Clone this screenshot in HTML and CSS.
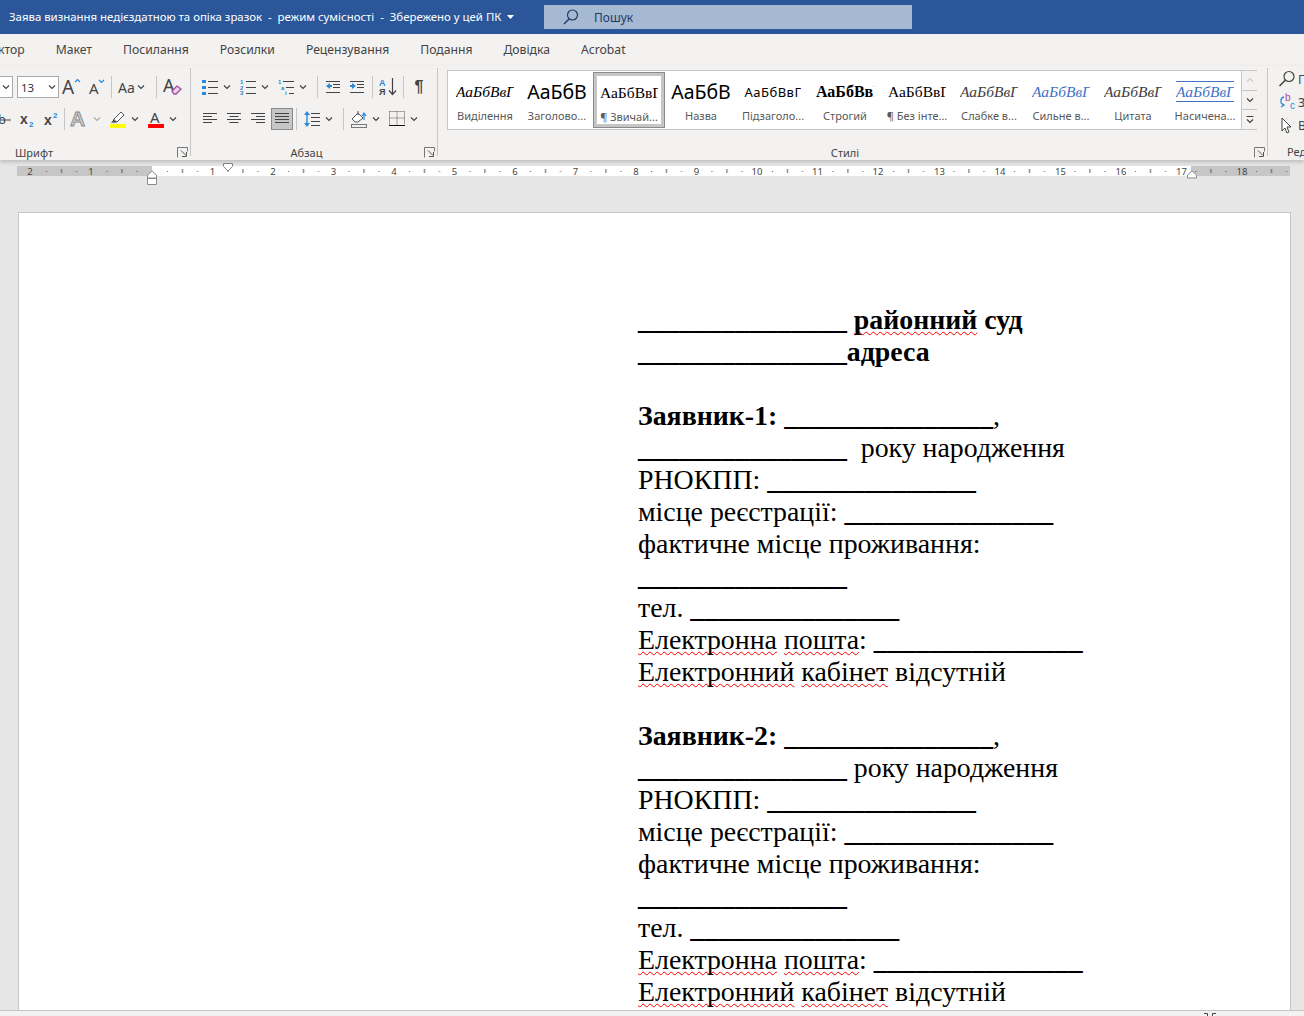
FILE: index.html
```html
<!DOCTYPE html>
<html lang="uk">
<head>
    <meta charset="UTF-8">
    <meta name="viewport" content="width=device-width, initial-scale=1.0">
    <title>Заява визнання недієздатною та опіка зразок</title>
    <link rel="stylesheet" href="styles.css">
</head>
<body>

<svg class="defs" width="0" height="0">
    <symbol id="chev" viewBox="0 0 10 10"><polyline points="2,3.5 5,6.5 8,3.5" fill="none" stroke="#444" stroke-width="1.2"/></symbol>
    <symbol id="launch" viewBox="0 0 11 11"><path d="M.5 10.5V.5h10v4" fill="none" stroke="#777"/><path d="M4 3.5l5 5M9.5 5v4.5H5" fill="none" stroke="#555"/></symbol>
    <symbol id="lines-left" viewBox="0 0 16 14"><path d="M1 1.5h14M1 4.5h9M1 7.5h14M1 10.5h9" stroke="#444" fill="none"/></symbol>
    <symbol id="lines-center" viewBox="0 0 16 14"><path d="M1 1.5h14M3.5 4.5h9M1 7.5h14M3.5 10.5h9" stroke="#444" fill="none"/></symbol>
    <symbol id="lines-right" viewBox="0 0 16 14"><path d="M1 1.5h14M6 4.5h9M1 7.5h14M6 10.5h9" stroke="#444" fill="none"/></symbol>
    <symbol id="lines-just" viewBox="0 0 16 14"><path d="M1 1.5h14M1 4.5h14M1 7.5h14M1 10.5h14" stroke="#444" fill="none"/></symbol>
</svg>

<div class="titlebar">
    <div class="doc-name">Заява визнання недієздатною та опіка зразок &nbsp;-&nbsp; режим сумісності &nbsp;-&nbsp; Збережено у цей ПК</div>
    <svg class="caret" width="7" height="4" viewBox="0 0 7 4"><path d="M0 0h7L3.5 4z" fill="#fff"/></svg>
    <div class="search">
        <svg width="18" height="18" viewBox="0 0 18 18"><circle cx="10.5" cy="7" r="5" fill="none" stroke="#1f3a66" stroke-width="1.2"/><path d="M7 11l-5 5" stroke="#1f3a66" stroke-width="1.4"/></svg>
        <span>Пошук</span>
    </div>
</div>

<div class="tabs">
    <span>ктор</span>
    <span>Макет</span>
    <span>Посилання</span>
    <span>Розсилки</span>
    <span>Рецензування</span>
    <span>Подання</span>
    <span>Довідка</span>
    <span>Acrobat</span>
</div>

<div class="ribbon">
    <div class="group group-font">
        <div class="row">
            <div class="select select-name"><svg width="10" height="10"><use href="#chev"/></svg></div>
            <div class="select select-size"><span>13</span><svg width="10" height="10"><use href="#chev"/></svg></div>
            <div class="btn"><svg width="20" height="20" viewBox="0 0 20 20"><text x="0" y="17" class="ic-a" font-size="19">A</text><path d="M13 5l2.5-2.5L18 5" fill="none" stroke="#2b88d8" stroke-width="1.2"/></svg></div>
            <div class="btn"><svg width="20" height="20" viewBox="0 0 20 20"><text x="3" y="17" class="ic-a" font-size="15">A</text><path d="M13 3l2.5 2.5L18 3" fill="none" stroke="#2b88d8" stroke-width="1.2"/></svg></div>
            <div class="sep"></div>
            <div class="btn btn-aa"><span>Aa</span><svg width="10" height="10"><use href="#chev"/></svg></div>
            <div class="sep sep-wide"></div>
            <div class="btn"><svg width="20" height="20" viewBox="0 0 20 20"><text x="1" y="15" class="ic-a" font-size="18">A</text><path d="M10 14l5-5 4 3-5 5h-2z" fill="#e8d5ea" stroke="#a347a3" stroke-width="1.3"/></svg></div>
        </div>
        <div class="row row-lower">
            <div class="btn"><svg width="20" height="20" viewBox="0 0 20 20"><text x="5" y="15" class="ic-a" font-size="13">b</text><path d="M2 11h16" stroke="#444"/></svg></div>
            <div class="btn"><svg width="20" height="20" viewBox="0 0 20 20"><text x="3" y="15" class="ic-b" font-size="14">x</text><text x="12" y="18" class="ic-blue" font-size="8">2</text></svg></div>
            <div class="btn"><svg width="20" height="20" viewBox="0 0 20 20"><text x="3" y="16" class="ic-b" font-size="14">x</text><text x="12" y="9" class="ic-blue" font-size="8">2</text></svg></div>
            <div class="sep"></div>
            <div class="btn"><svg width="20" height="20" viewBox="0 0 20 20"><text x="0" y="17" font-size="21" class="ic-effect">A</text></svg></div>
            <svg class="chev chev-dim" width="10" height="10"><use href="#chev"/></svg>
            <div class="btn"><svg width="20" height="20" viewBox="0 0 20 20"><path d="M5 13l1-3 7-7 3 3-7 7z" fill="#fff" stroke="#555"/><path d="M3 14l3-4 3 3z" fill="#555"/><rect x="2" y="15" width="16" height="4" fill="#ffff00"/></svg></div>
            <svg class="chev" width="10" height="10"><use href="#chev"/></svg>
            <div class="btn"><svg width="20" height="20" viewBox="0 0 20 20"><text x="4" y="14" class="ic-a" font-size="15">A</text><rect x="2" y="15" width="16" height="4" fill="#f00"/></svg></div>
            <svg class="chev" width="10" height="10"><use href="#chev"/></svg>
        </div>
        <div class="group-foot"><span>Шрифт</span><svg width="11" height="11"><use href="#launch"/></svg></div>
    </div>

    <div class="group group-par">
        <div class="row">
            <div class="btn"><svg width="16" height="16" viewBox="0 0 16 16"><path d="M0 1h4v3H0zM0 7h4v3H0zM0 13h4v3H0z" fill="#2b88d8"/><path d="M6 2.5h10M6 8.5h10M6 14.5h10" stroke="#444"/></svg></div>
            <svg class="chev" width="10" height="10"><use href="#chev"/></svg>
            <div class="btn"><svg width="16" height="16" viewBox="0 0 16 16"><text x="0" y="5" class="ic-blue" font-size="6">1</text><text x="0" y="10.5" class="ic-blue" font-size="6">2</text><text x="0" y="16" class="ic-blue" font-size="6">3</text><path d="M6 2.5h10M6 8.5h10M6 14.5h10" stroke="#444"/></svg></div>
            <svg class="chev" width="10" height="10"><use href="#chev"/></svg>
            <div class="btn"><svg width="16" height="16" viewBox="0 0 16 16"><text x="0" y="5" class="ic-blue" font-size="6">1</text><text x="3" y="10.5" class="ic-blue" font-size="6">a</text><text x="7" y="16" class="ic-blue" font-size="6">i</text><path d="M5 2.5h11M8 8.5h8M11 14.5h5" stroke="#444"/></svg></div>
            <svg class="chev" width="10" height="10"><use href="#chev"/></svg>
            <div class="sep"></div>
            <div class="btn"><svg width="16" height="14" viewBox="0 0 16 14"><path d="M1 1.5h14M8 4.5h7M8 7.5h7M1 12.5h14" stroke="#444"/><path d="M1 6l4-3v2h2v2H5v2z" fill="#2b88d8"/></svg></div>
            <div class="btn"><svg width="16" height="14" viewBox="0 0 16 14"><path d="M1 1.5h14M8 4.5h7M8 7.5h7M1 12.5h14" stroke="#444"/><path d="M7 6L3 3v2H1v2h2v2z" fill="#2b88d8"/></svg></div>
            <div class="sep"></div>
            <div class="btn"><svg width="18" height="20" viewBox="0 0 18 20"><text x="0" y="9" class="ic-blue" font-size="9">А</text><text x="0" y="18" class="ic-b" font-size="9">Я</text><path d="M13.5 1v16M10 13.5l3.5 4 3.5-4" fill="none" stroke="#444" stroke-width="1.2"/></svg></div>
            <div class="sep"></div>
            <div class="btn pilcrow">¶</div>
        </div>
        <div class="row row-lower">
            <div class="btn"><svg width="16" height="14"><use href="#lines-left"/></svg></div>
            <div class="btn"><svg width="16" height="14"><use href="#lines-center"/></svg></div>
            <div class="btn"><svg width="16" height="14"><use href="#lines-right"/></svg></div>
            <div class="btn btn-on"><svg width="16" height="14"><use href="#lines-just"/></svg></div>
            <div class="sep"></div>
            <div class="btn"><svg width="16" height="16" viewBox="0 0 16 16"><path d="M3 1v14" stroke="#2b88d8" stroke-width="1.4"/><path d="M0 4l3-4 3 4zM0 12l3 4 3-4z" fill="#2b88d8"/><path d="M7 2.5h9M7 6.5h9M7 10.5h9M7 14.5h9" stroke="#444"/></svg></div>
            <svg class="chev" width="10" height="10"><use href="#chev"/></svg>
            <div class="sep"></div>
            <div class="btn"><svg width="18" height="18" viewBox="0 0 18 18"><path d="M2 9l6-6 5 5-5 4H5z" fill="#fff" stroke="#555"/><path d="M8 1v4" stroke="#555"/><path d="M14 10V4M12 6l2-3 2 3" fill="none" stroke="#2b88d8" stroke-width="1.2"/><rect x="1.5" y="14.5" width="15" height="3" fill="#f3f2f1" stroke="#777"/></svg></div>
            <svg class="chev" width="10" height="10"><use href="#chev"/></svg>
            <div class="btn"><svg width="16" height="16" viewBox="0 0 16 16"><path d="M.5 .5h15v13M.5 .5v13M8 .5v13M.5 7h15" fill="none" stroke="#555" stroke-dasharray="1 1"/><path d="M0 14.5h16" stroke="#111"/></svg></div>
            <svg class="chev" width="10" height="10"><use href="#chev"/></svg>
        </div>
        <div class="group-foot"><span>Абзац</span><svg width="11" height="11"><use href="#launch"/></svg></div>
    </div>

    <div class="group group-styles">
        <div class="gallery">
            <div class="style-item"><div class="pv pv-em">АаБбВвГ</div><div class="st-name">Виділення</div></div>
            <div class="style-item"><div class="pv pv-head">АаБбВ</div><div class="st-name">Заголово...</div></div>
            <div class="style-item active"><div class="pv pv-normal">АаБбВвГ</div><div class="st-name">¶ Звичай...</div></div>
            <div class="style-item"><div class="pv pv-head">АаБбВ</div><div class="st-name">Назва</div></div>
            <div class="style-item"><div class="pv pv-sub">АаБбВвГ</div><div class="st-name">Підзаголо...</div></div>
            <div class="style-item"><div class="pv pv-strong">АаБбВвГ</div><div class="st-name">Строгий</div></div>
            <div class="style-item"><div class="pv pv-normal">АаБбВвГ</div><div class="st-name">¶ Без інте...</div></div>
            <div class="style-item"><div class="pv pv-em pv-grey">АаБбВвГ</div><div class="st-name">Слабке в...</div></div>
            <div class="style-item"><div class="pv pv-em pv-blue">АаБбВвГ</div><div class="st-name">Сильне в...</div></div>
            <div class="style-item"><div class="pv pv-em pv-grey">АаБбВвГ</div><div class="st-name">Цитата</div></div>
            <div class="style-item"><div class="pv pv-em pv-blue pv-lined">АаБбВвГ</div><div class="st-name">Насичена...</div></div>
            <div class="scroller">
                <div class="scroll-btn"><svg width="10" height="10" viewBox="0 0 10 10"><polyline points="2,6.5 5,3.5 8,6.5" fill="none" stroke="#ccc" stroke-width="1.2"/></svg></div>
                <div class="scroll-btn"><svg width="10" height="10"><use href="#chev"/></svg></div>
                <div class="scroll-btn"><svg width="10" height="10" viewBox="0 0 10 10"><path d="M1.5 1.5h7" stroke="#444"/><polyline points="2,4.5 5,7.5 8,4.5" fill="none" stroke="#444" stroke-width="1.2"/></svg></div>
            </div>
        </div>
        <div class="group-foot"><span>Стилі</span><svg width="11" height="11"><use href="#launch"/></svg></div>
    </div>

    <div class="group group-edit">
        <div class="edit-item"><svg width="18" height="18" viewBox="0 0 18 18"><circle cx="11" cy="6.5" r="5" fill="none" stroke="#444" stroke-width="1.2"/><path d="M7.5 10L1.5 16" stroke="#444" stroke-width="1.6"/></svg><span>П</span></div>
        <div class="edit-item"><svg width="18" height="18" viewBox="0 0 18 18"><text x="7" y="8" font-size="10" class="ic-purple">b</text><text x="12" y="16" font-size="10" class="ic-bluec">c</text><path d="M6 4C2 5 2 10 5 12M3 14l3-2-3-2" fill="none" stroke="#2b88d8" stroke-width="1.3"/></svg><span>З</span></div>
        <div class="edit-item"><svg width="18" height="18" viewBox="0 0 18 18"><path d="M4 2v13l3-3 2 5 2-1-2-5h4z" fill="#fff" stroke="#444"/></svg><span>В</span></div>
        <div class="edit-foot">Ред</div>
    </div>
</div>

<div class="workspace">
    <svg class="ruler" width="1304" height="30" viewBox="0 0 1304 30">
        <defs>
            <pattern id="ticks" x="152" y="0" width="60.5" height="30" patternUnits="userSpaceOnUse">
                <rect x="15" y="11" width="1" height="1" fill="#555"/>
                <rect x="30" y="9" width="1" height="4" fill="#555"/>
                <rect x="45" y="11" width="1" height="1" fill="#555"/>
            </pattern>
        </defs>
        <rect x="17" y="6" width="135" height="10" fill="#c6c6c6"/>
        <rect x="152" y="6" width="1039" height="10" fill="#fff"/>
        <rect x="1191" y="6" width="99" height="10" fill="#c6c6c6"/>
        <rect x="17" y="6" width="1273" height="10" fill="url(#ticks)"/>
        <g class="ruler-num">
            <text x="30" y="15">2</text><text x="91" y="15">1</text>
            <text x="212.5" y="15">1</text><text x="273" y="15">2</text><text x="333.5" y="15">3</text><text x="394" y="15">4</text>
            <text x="454.5" y="15">5</text><text x="515" y="15">6</text><text x="575.5" y="15">7</text><text x="636" y="15">8</text>
            <text x="696.5" y="15">9</text><text x="757" y="15">10</text><text x="817.5" y="15">11</text><text x="878" y="15">12</text>
            <text x="939.5" y="15">13</text><text x="1000" y="15">14</text><text x="1060.5" y="15">15</text><text x="1121" y="15">16</text>
            <text x="1181.5" y="15">17</text><text x="1242" y="15">18</text>
        </g>
        <g class="ruler-mark">
            <path d="M223.5 3.5h9v3l-4.5 4.5-4.5-4.5z"/>
            <path d="M147.5 18v-3l4.5-4 4.5 4v3z"/>
            <path d="M147.5 18.5h9v6h-9z"/>
            <path d="M1187.5 18v-3l4.5-4 4.5 4v3z"/>
        </g>
    </svg>

    <div class="page">
        <p class="b">_______________ <span class="spell">районний</span> суд</p>
        <p class="b">_______________адреса</p>
        <p>&nbsp;</p>
        <p><b>Заявник-1: _______________</b>,</p>
        <p><b>_______________</b>  року народження</p>
        <p>РНОКПП: <b>_______________</b></p>
        <p>місце реєстрації: <b>_______________</b></p>
        <p>фактичне місце проживання:</p>
        <p><b>_______________</b></p>
        <p>тел. <b>_______________</b></p>
        <p><span class="spell">Електронна</span> <span class="spell">пошта</span>: <b>_______________</b></p>
        <p><span class="spell">Електронний</span> <span class="spell">кабінет</span> відсутній</p>
        <p>&nbsp;</p>
        <p><b>Заявник-2: _______________</b>,</p>
        <p><b>_______________</b> року народження</p>
        <p>РНОКПП: <b>_______________</b></p>
        <p>місце реєстрації: <b>_______________</b></p>
        <p>фактичне місце проживання:</p>
        <p><b>_______________</b></p>
        <p>тел. <b>_______________</b></p>
        <p><span class="spell">Електронна</span> <span class="spell">пошта</span>: <b>_______________</b></p>
        <p><span class="spell">Електронний</span> <span class="spell">кабінет</span> відсутній</p>
    </div>
</div>

<div class="statusbar">
    <svg width="14" height="6" viewBox="0 0 14 6"><path d="M4.5 6V2.5H1M9.5 6V2.5H13" fill="none" stroke="#444"/></svg>
</div>

</body>
</html>
```

FILE: styles.css
```css
* {
    box-sizing: border-box;
}

body {
    margin: 0;
    height: 100vh;
    overflow: hidden;
    display: flex;
    flex-direction: column;
    font-family: "Noto Sans", Arial, sans-serif;
    background-color: #e6e6e6;
    color: #444;
}

svg {
    overflow: visible;
}

.defs {
    position: absolute;
}

.titlebar {
    height: 34px;
    flex: none;
    background-color: #2b579a;
    color: #fff;
    display: flex;
    align-items: center;
    padding-left: 9px;
}

.doc-name {
    font-size: 11.4px;
    width: 493px;
    white-space: nowrap;
    padding-bottom: 2px;
}

.caret {
    margin-left: 5px;
}

.search {
    margin-left: 30px;
    width: 368px;
    height: 24px;
    background-color: #a5b9d3;
    color: #1f3a66;
    display: flex;
    align-items: center;
    font-size: 12px;
    padding-left: 18px;
    gap: 14px;
}

.tabs {
    height: 32px;
    flex: none;
    background-color: #f3f2f1;
    display: flex;
    align-items: center;
    gap: 31px;
    font-size: 12.2px;
    padding-bottom: 2px;
}

.tabs span:first-child {
    margin-left: -2px;
}

.ribbon {
    height: 94px;
    flex: none;
    background-color: #f3f2f1;
    display: flex;
    position: relative;
    box-shadow: 0 2px 4px rgba(0, 0, 0, 0.18);
}

.group {
    margin-top: 2px;
    height: 88px;
    border-right: 1px solid #c6c6c6;
    display: flex;
    flex-direction: column;
    flex: none;
}

.group-font {
    margin-left: -107px;
    width: 298px;
}

.group-par {
    width: 247px;
}

.group-styles {
    width: 830px;
}

.group-edit {
    border-right: none;
    padding-left: 10px;
    flex: 1;
}

.row {
    display: flex;
    align-items: center;
    height: 22px;
    margin-top: 8px;
}

.row-lower {
    margin-top: 10px;
}

.group-font .row-lower {
    padding-left: 98px;
}

.group-font .row-lower .sep {
    margin-left: 1px;
}

.group-par .row {
    padding-left: 7px;
}

.group-foot {
    margin-top: auto;
    margin-bottom: -3px;
    height: 14px;
    display: flex;
    align-items: center;
    font-size: 11px;
    padding-right: 2px;
}

.group-foot span {
    flex: 1;
    text-align: center;
    padding-right: 2px;
}

.select {
    height: 22px;
    background-color: #fff;
    border: 1px solid #aaa;
    display: flex;
    align-items: center;
    justify-content: space-between;
    padding-right: 1px;
    flex: none;
}

.select-name {
    width: 120px;
    justify-content: flex-end;
    margin-right: 4px;
}

.select-size {
    width: 42px;
    font-size: 11.5px;
    padding-left: 3px;
    margin-right: 1px;
    color: #333;
}

.btn {
    width: 24px;
    height: 22px;
    flex: none;
    display: flex;
    align-items: center;
    justify-content: center;
}

.btn-aa {
    width: 34px;
    gap: 1px;
    font-size: 14px;
}

.btn-on {
    width: 22px;
    margin-left: 1px;
    background-color: #c6c6c6;
    border: 1px solid #8a8a8a;
}

.pilcrow {
    font-family: "Liberation Sans", sans-serif;
    font-weight: bold;
    font-size: 16px;
}

.chev {
    flex: none;
    margin-right: 4px;
}

.chev + .sep {
    margin-left: 5px;
}

.chev-dim {
    opacity: 0.4;
}

.sep {
    width: 1px;
    height: 22px;
    margin: 0 3px;
    background-color: #c6c6c6;
    flex: none;
}

.sep-wide {
    margin-left: 7px;
}

.ic-a {
    font-family: "Noto Sans", sans-serif;
    fill: #444;
}

.ic-b {
    font-family: "Liberation Sans", sans-serif;
    font-weight: bold;
    fill: #444;
}

.ic-blue {
    font-family: "Liberation Sans", sans-serif;
    font-weight: bold;
    fill: #2b88d8;
}

.ic-bluec {
    font-family: "Liberation Sans", sans-serif;
    fill: #2b88d8;
}

.ic-purple {
    font-family: "Liberation Sans", sans-serif;
    fill: #a347a3;
}

.ic-effect {
    font-family: "Liberation Sans", sans-serif;
    font-weight: bold;
    fill: #c9c9c9;
    stroke: #888;
    stroke-width: 0.8;
}

.gallery {
    margin-top: 2px;
    margin-left: 9px;
    width: 810px;
    height: 60px;
    background-color: #fff;
    border: 1px solid #c6c6c6;
    display: flex;
    padding-left: 1px;
}

.style-item {
    width: 72px;
    height: 58px;
    flex: none;
    display: flex;
    flex-direction: column;
    align-items: center;
    padding: 0 6px;
    overflow: hidden;
    text-align: center;
}

.style-item.active {
    border: 1px solid #8a8a8a;
    outline: 3px solid #c6c6c6;
    outline-offset: -4px;
    padding: 0 5px;
    margin-top: 1px;
    height: 56px;
}

.pv {
    height: 26px;
    margin-top: 8px;
    width: 58px;
    line-height: 26px;
    white-space: nowrap;
    overflow: hidden;
    color: #000;
    font-family: "Liberation Serif", serif;
    font-size: 15.5px;
    flex: none;
}

.active .pv {
    margin-top: 7px;
}

.pv-em {
    font-style: italic;
}

.pv-grey {
    color: #404040;
}

.pv-blue {
    color: #4472c4;
}

.pv-lined {
    border-top: 1px solid #4472c4;
    border-bottom: 1px solid #4472c4;
    line-height: 20px;
    height: 21px;
    margin-top: 10px;
    margin-bottom: 3px;
}

.pv-head {
    font-family: "Noto Sans", sans-serif;
    font-size: 19.5px;
    width: 62px;
}

.pv-sub {
    font-family: "Noto Sans", sans-serif;
    font-size: 13px;
    letter-spacing: 0.5px;
}

.pv-strong {
    font-weight: bold;
    font-size: 16px;
}

.st-name {
    font-size: 11px;
    color: #595959;
    white-space: nowrap;
    margin-top: 3px;
}

.scroller {
    width: 16px;
    flex: none;
    display: flex;
    flex-direction: column;
    border-left: 1px solid #c6c6c6;
    background-color: #f3f2f1;
}

.scroll-btn {
    flex: 1;
    display: flex;
    align-items: center;
    justify-content: center;
    border-bottom: 1px solid #c6c6c6;
}

.scroll-btn:last-child {
    border-bottom: none;
}

.edit-item {
    display: flex;
    align-items: center;
    height: 24px;
    gap: 2px;
    font-size: 12.5px;
    margin-top: -1px;
}

.edit-foot {
    margin-top: auto;
    margin-bottom: -3px;
    height: 14px;
    font-size: 11px;
    line-height: 14px;
    padding-left: 9px;
}

.workspace {
    flex: 1;
    min-height: 0;
    overflow: hidden;
}

.ruler {
    display: block;
}

.ruler-num text {
    font-family: "Noto Sans", sans-serif;
    font-size: 9.5px;
    fill: #444;
    text-anchor: middle;
}

.ruler-mark path {
    fill: #fff;
    stroke: #8a8a8a;
}

.page {
    margin: 22px 13px 0 18px;
    height: 900px;
    background-color: #fff;
    border: 1px solid #c6c6c6;
    padding: 91px 0 0 619px;
    font-family: "Liberation Serif", serif;
    font-size: 27.85px;
    line-height: 32px;
    color: #000;
}

.page p {
    margin: 0;
    white-space: pre;
}

.page .b {
    font-weight: bold;
}

.spell {
    text-decoration: underline wavy #f00;
    text-decoration-thickness: 1px;
    text-decoration-skip-ink: none;
    text-underline-offset: 2px;
}

.statusbar {
    height: 6px;
    flex: none;
    background-color: #f3f2f1;
    border-top: 1px solid #c6c6c6;
    padding-left: 1203px;
    overflow: hidden;
}

.statusbar svg {
    display: block;
}
```
